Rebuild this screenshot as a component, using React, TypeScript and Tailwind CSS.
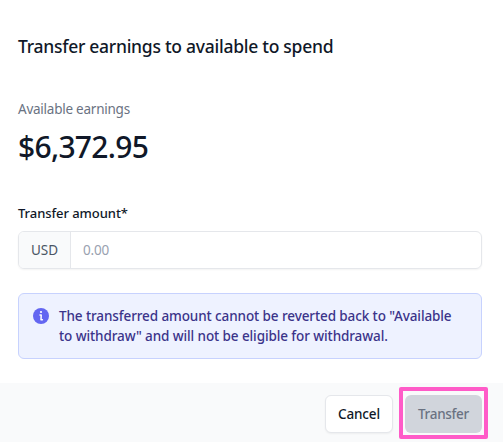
import React, { useState } from 'react';

const InfoIcon = () => (
  <svg className="h-4 w-4 shrink-0" viewBox="0 0 16 16" fill="none">
    <circle cx="8" cy="8" r="8" fill="#6366f1" />
    <circle cx="8" cy="4" r="1.1" fill="#fff" />
    <path d="M7 7h1.2l-.2 4.8h1.4" stroke="#fff" strokeWidth="1.5" strokeLinecap="round" strokeLinejoin="round" />
  </svg>
);

const App = () => {
  const [amount, setAmount] = useState('');

  return (
    <div className="flex h-[442px] w-[503px] flex-col bg-white font-['Noto_Sans','Open_Sans',sans-serif] text-sm text-gray-900">
      <div className="flex-1 pl-[18px] pr-[21px] pt-8">
        <h2 className="text-[17.5px] font-medium leading-7 tracking-[-0.27px]">Transfer earnings to available to spend</h2>

        <p className="mt-[39px] text-[13.5px] leading-5 tracking-[-0.24px] text-gray-500">Available earnings</p>
        <p className="mt-2.5 text-[30px] font-medium leading-9 tracking-[-0.7px]">$6,372.95</p>

        <label htmlFor="amount" className="mt-[38px] block text-[13px] font-medium leading-5 tracking-[-0.06px]">
          Transfer amount*
        </label>
        <div className="mt-2 flex h-[38px] overflow-hidden rounded-md border border-gray-200 shadow-xs">
          <span className="flex w-[52px] items-center justify-center border-r border-gray-200 bg-gray-50 pt-0.5 text-[13.5px] text-gray-600">
            USD
          </span>
          <input
            id="amount"
            className="flex-1 px-3 pt-0.5 text-[13.5px] tracking-[-0.2px] outline-none placeholder:text-gray-400"
            placeholder="0.00"
            value={amount}
            onChange={(e) => setAmount(e.target.value)}
          />
        </div>

        <div className="mt-6 flex h-[66px] gap-2.5 rounded-md border border-[#c7d2fe] bg-[#eef2ff] pl-3.5 pt-3.5">
          <InfoIcon />
          <p className="-mt-0.5 whitespace-nowrap text-[13.5px] font-medium leading-5 tracking-[-0.1px] text-[#3b348a]">
            The transferred amount cannot be reverted back to "Available
            <br />
            to withdraw" and will not be eligible for withdrawal.
          </p>
        </div>
      </div>

      <div className="flex h-[59px] items-start justify-end gap-1.5 bg-gray-50 pr-[15px] pt-1">
        <button className="mt-2 h-[38px] w-[68px] rounded-md border border-gray-200 bg-white pt-0.5 text-[13.5px] font-medium tracking-[-0.15px] shadow-xs">
          Cancel
        </button>
        <div className="h-[52px] w-[89px] rounded-xs border-4 border-[#ff5bc8] px-[2px] pb-[2px] pt-1">
          <button className="h-full w-full rounded-md bg-gray-300 pt-0.5 text-[13.5px] font-medium tracking-[-0.3px] text-gray-500" disabled>
            Transfer
          </button>
        </div>
      </div>
    </div>
  );
};

export default App;
